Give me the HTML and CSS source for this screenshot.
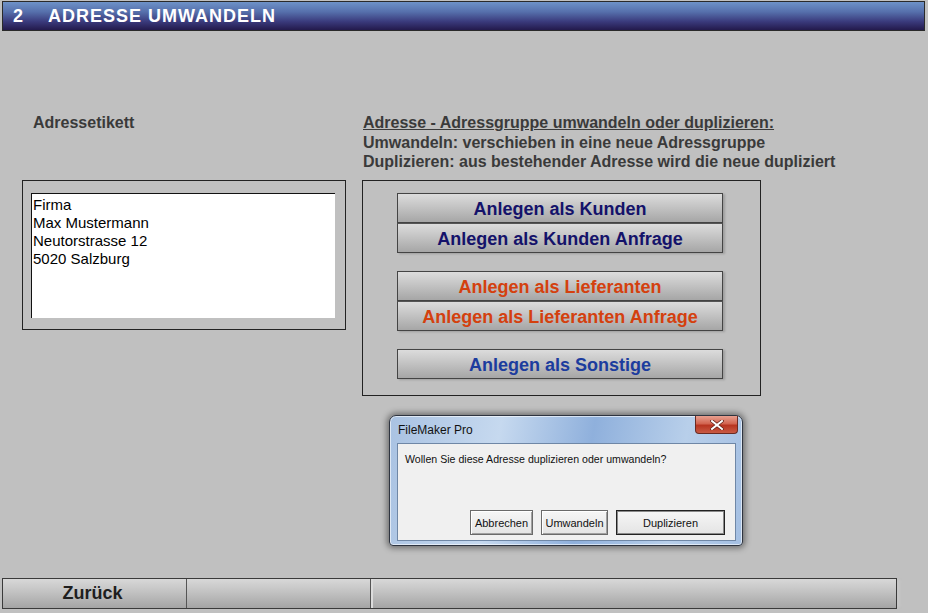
FILE: index.html
```html
<!DOCTYPE html>
<html lang="de">
<head>
  <meta charset="UTF-8">
  <title>Adresse umwandeln</title>
  <link rel="stylesheet" href="styles.css">
</head>
<body>

  <div class="title-bar">
    <span class="title-num">2</span>
    <span class="title-text">ADRESSE UMWANDELN</span>
  </div>

  <div class="main">
    <div class="label">Adressetikett</div>
    <div class="info">
      <div class="info-head">Adresse - Adressgruppe umwandeln oder duplizieren:</div>
      <div>Umwandeln: verschieben in eine neue Adressgruppe</div>
      <div>Duplizieren: aus bestehender Adresse wird die neue dupliziert</div>
    </div>

    <div class="address-box">
      <div class="address-field">
        Firma<br>
        Max Mustermann<br>
        Neutorstrasse 12<br>
        5020 Salzburg
      </div>
    </div>

    <div class="action-panel">
      <div class="btn-group">
        <button class="action-btn kunde">Anlegen als Kunden</button>
        <button class="action-btn kunde">Anlegen als Kunden Anfrage</button>
      </div>
      <div class="btn-group">
        <button class="action-btn lieferant">Anlegen als Lieferanten</button>
        <button class="action-btn lieferant">Anlegen als Lieferanten Anfrage</button>
      </div>
      <div class="btn-group">
        <button class="action-btn sonstige">Anlegen als Sonstige</button>
      </div>
    </div>
  </div>

  <!-- system message box over the layout -->
  <div class="dialog">
    <div class="dialog-title">FileMaker Pro</div>
    <div class="dialog-close">
      <svg viewBox="0 0 14 10" width="14" height="10">
        <path d="M2 1 L12 9 M12 1 L2 9" stroke="#5a1a10" stroke-width="3.4" stroke-linecap="square"/>
        <path d="M2 1 L12 9 M12 1 L2 9" stroke="#fff" stroke-width="2" stroke-linecap="square"/>
      </svg>
    </div>
    <div class="dialog-body">
      <p class="dialog-msg">Wollen Sie diese Adresse duplizieren oder umwandeln?</p>
      <div class="dialog-buttons">
        <button class="win-btn btn-cancel">Abbrechen</button>
        <button class="win-btn btn-convert">Umwandeln</button>
        <button class="win-btn btn-default">Duplizieren</button>
      </div>
    </div>
  </div>

  <div class="footer">
    <div class="footer-cell back">Zurück</div>
    <div class="footer-cell middle"></div>
    <div class="footer-cell rest"></div>
  </div>

</body>
</html>
```

FILE: styles.css
```css
* {
  margin: 0;
  padding: 0;
  box-sizing: border-box;
}

body {
  font-family: "Liberation Sans", Arial, sans-serif;
  background-color: #c0c0c0;
  color: #3a3a3a;
  height: 613px;
  display: flex;
  flex-direction: column;
  overflow: hidden;
}


.title-bar {
  margin: 1px 3px 0 2px;
  height: 30px;
  border: 1px solid #2a2a2a;
  background: linear-gradient(#6e92c8 0%, #5670ac 35%, #3a3a7c 70%, #231a4c 100%);
  color: #fff;
  font-size: 18px;
  font-weight: bold;
  letter-spacing: 1px;
  display: flex;
  align-items: center;
  padding-left: 10px;
}

.title-num {
  margin-right: 24px;
}


.main {
  margin-top: 82px;
  padding-left: 22px;
  display: grid;
  grid-template-columns: 324px 399px;
  column-gap: 16px;
  row-gap: 8px;
  font-size: 16px;
  font-weight: bold;
  line-height: 19.5px;
}

.label {
  padding-left: 11px;
}

.info {
  white-space: nowrap;
  padding-left: 1px;
}

.info-head {
  text-decoration: underline;
}


.address-box {
  height: 150px;
  border: 1px solid #222;
  padding: 12px 10px 11px 8px;
}

.address-field {
  height: 100%;
  background: #fff;
  border-top: 1px solid #111;
  border-left: 1px solid #111;
  padding: 2px 0 0 1px;
  font-size: 15px;
  font-weight: normal;
  line-height: 18px;
  color: #000;
}


.action-panel {
  height: 216px;
  border: 1px solid #222;
  padding: 12px 0 0 34px;
  display: flex;
  flex-direction: column;
  gap: 18px;
}

.btn-group {
  display: flex;
  flex-direction: column;
  width: 326px;
}

.action-btn {
  height: 30px;
  padding-top: 3px;
  border: 1px solid #444;
  background: linear-gradient(#dcdcdc, #c4c4c4 45%, #a6a6a6);
  box-shadow: 2px 1px 2px rgba(0, 0, 0, 0.18);
  font-family: "Liberation Sans", Arial, sans-serif;
  font-size: 18px;
  font-weight: bold;
  cursor: pointer;
}

.action-btn + .action-btn {
  border-top-color: #555;
}

.kunde {
  color: #14126a;
}

.lieferant {
  color: #d4400e;
}

.sonstige {
  color: #1c3c9e;
}


.dialog {
  position: absolute;
  left: 389px;
  top: 415px;
  width: 354px;
  height: 131px;
  border: 1px solid #2e3440;
  border-radius: 7px 7px 4px 4px;
  background: linear-gradient(100deg, #a9c2e2 0%, #c6d9ef 30%, #8fb0dc 55%, #b8cfea 80%, #a4bfe2 100%);
  box-shadow: 0 0 6px 2px rgba(0, 0, 0, 0.45), inset 0 0 0 1px rgba(255, 255, 255, 0.6);
  padding: 27px 6px 4px 7px;
  display: flex;
  flex-direction: column;
  font-family: "Liberation Sans", Arial, sans-serif;
}

.dialog-title {
  position: absolute;
  left: 8px;
  top: 7px;
  font-size: 12px;
  color: #111;
}

.dialog-close {
  position: absolute;
  left: 305px;
  top: 0;
  width: 43px;
  height: 18px;
  border: 1px solid #6a2a22;
  border-top: none;
  border-radius: 0 0 4px 4px;
  background: linear-gradient(#e8a090, #d26450 45%, #b83420 55%, #c85a44);
  display: flex;
  align-items: center;
  justify-content: center;
}

.dialog-body {
  flex: 1;
  background: #f0f0f0;
  border: 1px solid #6f87a6;
  display: flex;
  flex-direction: column;
  padding: 9px 10px 5px 7px;
}

.dialog-msg {
  font-size: 10.6px;
  color: #111;
  white-space: nowrap;
}

.dialog-buttons {
  margin-top: auto;
  display: flex;
  justify-content: flex-end;
  gap: 8px;
}

.win-btn {
  height: 25px;
  font-family: "Liberation Sans", Arial, sans-serif;
  font-size: 11px;
  color: #111;
  background: linear-gradient(#f6f6f6, #e4e4e4);
  border: 1px solid #6a6a6a;
  box-shadow: inset 1px 1px 0 #fff, inset -1px -1px 0 #a0a0a0;
}

.btn-cancel {
  width: 63px;
}

.btn-convert {
  width: 67px;
}

.btn-default {
  width: 109px;
  border-color: #222;
  box-shadow: inset 0 0 0 1px #8a8a8a;
}


.footer {
  margin: auto 0 4px 2px;
  width: 895px;
  height: 31px;
  border: 1px solid #3a3a3a;
  display: flex;
  background: linear-gradient(#d8d8d8, #c2c2c2 45%, #a4a4a4);
  box-shadow: 5px 0 3px -2px rgba(200, 200, 200, 0.9);
}

.footer-cell {
  display: flex;
  align-items: center;
  justify-content: center;
}

.back {
  width: 183px;
  padding-right: 4px;
  font-size: 18px;
  font-weight: bold;
  color: #1e1e1e;
}

.middle {
  width: 184px;
  border-left: 1px solid #555;
}

.rest {
  flex: 1;
  border-left: 1px solid #555;
  box-shadow: inset 2px 0 0 #dcdcdc;
}
```
